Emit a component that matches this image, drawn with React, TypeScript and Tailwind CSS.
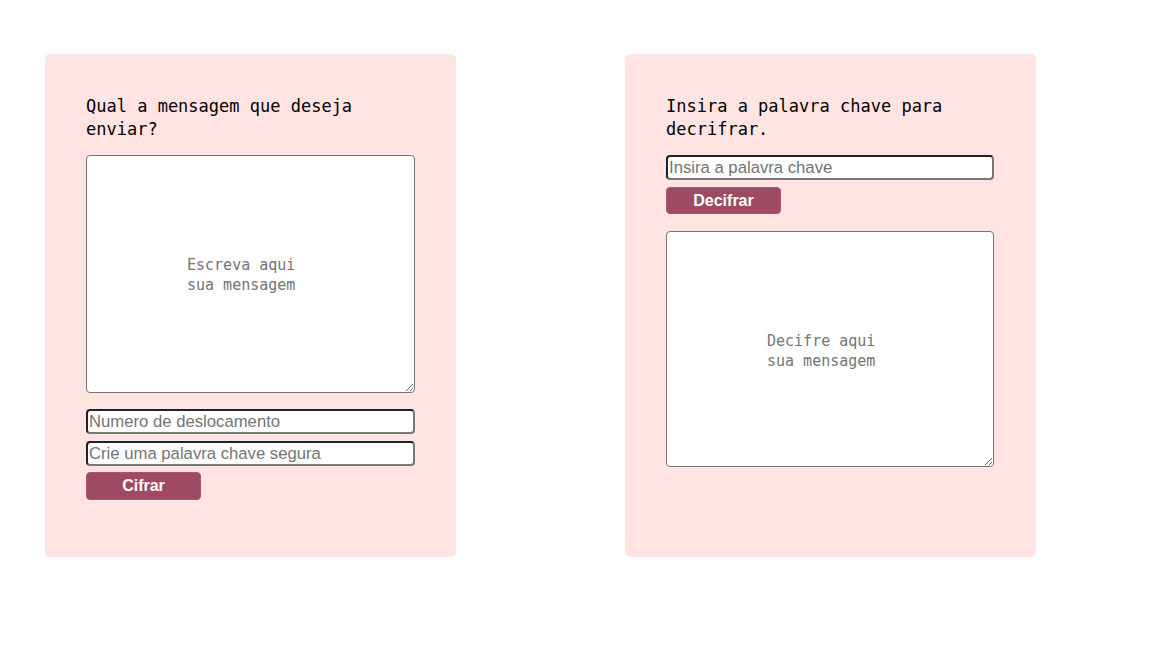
import React from "react";

const mono = "font-['DejaVu_Sans_Mono',monospace]";

const App: React.FC = () => {
  return (
    <main className="flex min-h-[648px] w-full gap-[169px] bg-white pl-[45px] pt-[54px]">
      <section className="h-[503px] w-[411px] rounded-[5px] bg-[#ffe4e1] px-[41px] pt-[41px]">
        <h2 className={`${mono} text-[17px] leading-[23px] text-black`}>
          Qual a mensagem que deseja enviar?
        </h2>
        <textarea
          placeholder="Escreva aqui sua mensagem"
          className={`${mono} mt-[14px] block h-[238px] w-[329px] rounded-[4px] border border-[#767676] bg-white px-[100px] pt-[99px] text-[15px] leading-[20px] placeholder:text-[#757575]`}
        />
        <input
          placeholder="Numero de deslocamento"
          className="mt-[16px] block h-[25px] w-[329px] rounded-[4px] border-2 border-t-[#222] border-l-[#222] border-r-[#777] border-b-[#777] bg-white px-[1px] font-['Liberation_Sans',Arial,sans-serif] text-[16.7px] placeholder:text-[#757575]"
        />
        <input
          placeholder="Crie uma palavra chave segura"
          className="mt-[7px] block h-[25px] w-[329px] rounded-[4px] border-2 border-t-[#222] border-l-[#222] border-r-[#777] border-b-[#777] bg-white px-[1px] font-['Liberation_Sans',Arial,sans-serif] text-[16.7px] placeholder:text-[#757575]"
        />
        <button className="mt-[6px] block h-[28px] w-[115px] rounded-[4px] border border-[#b05272] bg-[#9e4a63] font-['Liberation_Sans',Arial,sans-serif] text-[16px] font-bold text-white">
          Cifrar
        </button>
      </section>

      <section className="h-[503px] w-[411px] rounded-[5px] bg-[#ffe4e1] px-[41px] pt-[41px]">
        <h2 className={`${mono} text-[17px] leading-[23px] text-black`}>
          Insira a palavra chave para decrifrar.
        </h2>
        <input
          placeholder="Insira a palavra chave"
          className="mt-[14px] block h-[25px] w-[328px] rounded-[4px] border-2 border-t-[#222] border-l-[#222] border-r-[#777] border-b-[#777] bg-white px-[1px] font-['Liberation_Sans',Arial,sans-serif] text-[16.7px] placeholder:text-[#757575]"
        />
        <button className="mt-[7px] block h-[27px] w-[115px] rounded-[4px] border border-[#b05272] bg-[#9e4a63] font-['Liberation_Sans',Arial,sans-serif] text-[16px] font-bold text-white">
          Decifrar
        </button>
        <textarea
          placeholder="Decifre aqui sua mensagem"
          className={`${mono} mt-[17px] block h-[236px] w-[328px] rounded-[4px] border border-[#767676] bg-white px-[100px] pt-[99px] text-[15px] leading-[20px] placeholder:text-[#757575]`}
        />
      </section>
    </main>
  );
};

export default App;
